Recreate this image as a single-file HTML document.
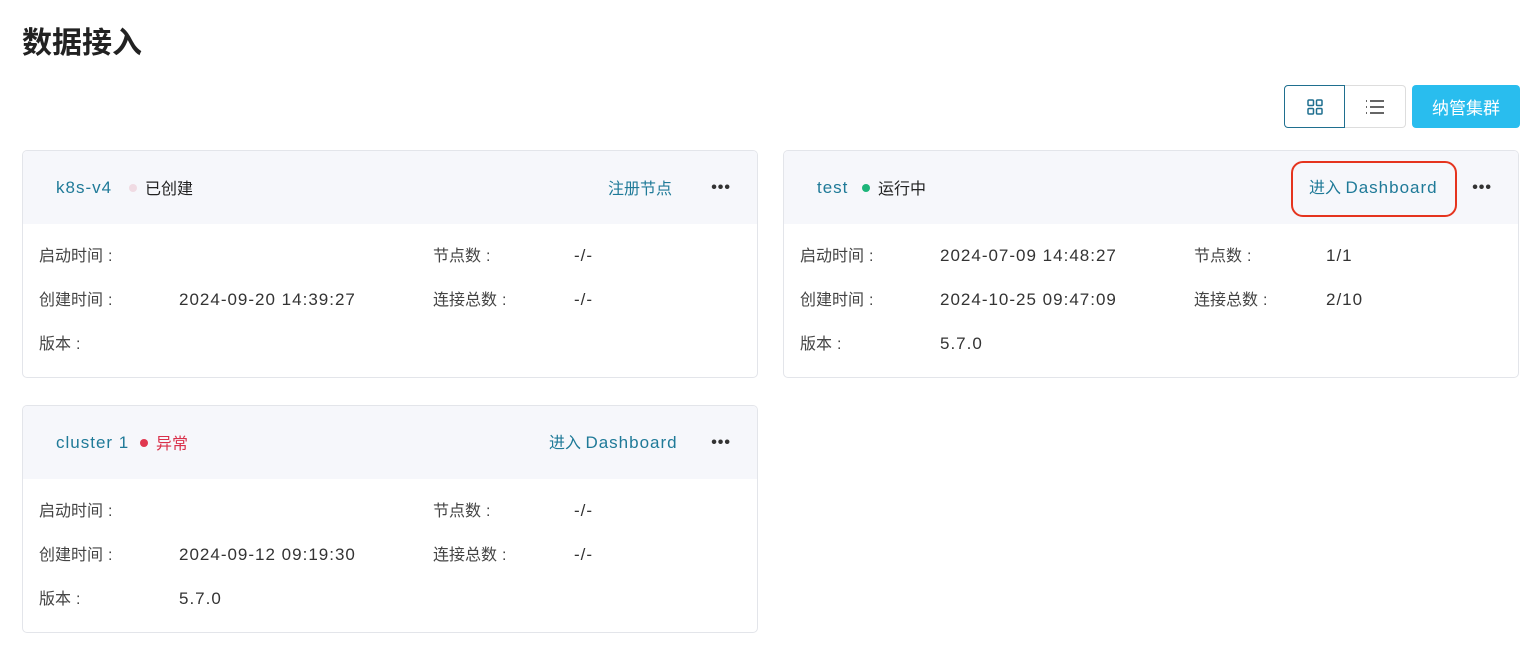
<!DOCTYPE html>
<html><head><meta charset="utf-8"><style>
*{margin:0;padding:0;box-sizing:border-box}
body{width:1536px;height:653px;background:#fff;font-family:"Liberation Sans","Noto Sans CJK SC",sans-serif;position:relative;overflow:hidden;color:#333}
h1{position:absolute;left:22px;top:20px;font-size:30px;line-height:40px;font-weight:bold;color:#222;font-family:"Noto Sans CJK SC",sans-serif}
.btns{position:absolute;left:1284px;top:85px;height:43px;display:flex}
.b{width:61px;height:43px;border:1px solid #ddd;display:flex;align-items:center;justify-content:center}
.b1{border:1.5px solid #1f6f8f;border-radius:4px 0 0 4px}
.b2{border-left:none;border-radius:0 4px 4px 0}
.add{position:absolute;left:1412px;top:85px;width:108px;height:43px;background:#29bdee;color:#fff;border-radius:4px;font-size:17px;display:flex;align-items:center;justify-content:center;font-family:"Noto Sans CJK SC",sans-serif}
.card{position:absolute;width:736px;height:228px;border:1px solid #e3e5ea;border-radius:5px;overflow:hidden}
.hd{height:73px;background:#f6f7fb;position:relative;font-size:16px}
.hd span{line-height:24px}
.name{position:absolute;left:33px;top:25px;color:#1f7a98}
.st{position:absolute;top:24px;color:#222;font-family:"Noto Sans CJK SC",sans-serif}
.dot{display:inline-block;width:8px;height:8px;border-radius:50%;margin-right:8px;vertical-align:2px}
.lk{position:absolute;top:25px;color:#1f7a98;white-space:nowrap}
.more{position:absolute;right:26px;top:25px;font-size:16px;letter-spacing:1px;color:#333;font-weight:bold}
.r{position:absolute;font-size:16px;line-height:24px;color:#444;white-space:nowrap;font-family:"Noto Sans CJK SC",sans-serif}
.r:not(.v){margin-top:-1px}
.c{font-family:"Liberation Sans",sans-serif;margin-left:5px}
.v{color:#333;font-family:"Liberation Sans",sans-serif;font-size:17px;letter-spacing:1px;margin-top:1px}
.L{font-family:"Liberation Sans",sans-serif;font-size:17px;letter-spacing:1px}
</style></head><body>
<h1>数据接入</h1>
<div class="btns"><div class="b b1"><svg width="18" height="18" viewBox="0 0 18 18" fill="none" stroke="#1f6f8f" stroke-width="1.5"><rect x="2" y="2" width="5.5" height="5.5" rx="1"/><rect x="10.5" y="2" width="5.5" height="5.5" rx="1"/><rect x="2" y="10.5" width="5.5" height="5.5" rx="1"/><rect x="10.5" y="10.5" width="5.5" height="5.5" rx="1"/></svg></div><div class="b b2"><svg width="20" height="16" viewBox="0 0 20 16" stroke="#333" stroke-width="1.4"><path d="M1 2h1M1 8h1M1 14h1M5 2h14M5 8h14M5 14h14"/></svg></div></div>
<div class="add">纳管集群</div>

<div class="card" style="left:22px;top:150px">
<div class="hd"><span class="name L">k8s-v4</span><span class="st" style="left:106px"><span class="dot" style="background:#f0dbe3"></span>已创建</span><span class="lk" style="left:585px;top:24px;font-family:'Noto Sans CJK SC',sans-serif">注册节点</span><span class="more">•••</span></div>
<div class="r" style="left:16px;top:92px">启动时间<span class="c">:</span></div><div class="r" style="left:410px;top:92px">节点数<span class="c">:</span></div><div class="r v" style="left:551px;top:92px">-/-</div>
<div class="r" style="left:16px;top:136px">创建时间<span class="c">:</span></div><div class="r v" style="left:156px;top:136px">2024-09-20 14:39:27</div><div class="r" style="left:410px;top:136px">连接总数<span class="c">:</span></div><div class="r v" style="left:551px;top:136px">-/-</div>
<div class="r" style="left:16px;top:180px">版本<span class="c">:</span></div>
</div>

<div class="card" style="left:783px;top:150px">
<div class="hd"><span class="name L">test</span><span class="st" style="left:78px"><span class="dot" style="background:#1db57a"></span>运行中</span><span class="lk" style="left:525px">进入 <span class="L">Dashboard</span></span><span class="more">•••</span>
<div style="position:absolute;left:507px;top:10px;width:166px;height:56px;border:2px solid #e5341e;border-radius:12px"></div></div>
<div class="r" style="left:16px;top:92px">启动时间<span class="c">:</span></div><div class="r v" style="left:156px;top:92px">2024-07-09 14:48:27</div><div class="r" style="left:410px;top:92px">节点数<span class="c">:</span></div><div class="r v" style="left:542px;top:92px">1/1</div>
<div class="r" style="left:16px;top:136px">创建时间<span class="c">:</span></div><div class="r v" style="left:156px;top:136px">2024-10-25 09:47:09</div><div class="r" style="left:410px;top:136px">连接总数<span class="c">:</span></div><div class="r v" style="left:542px;top:136px">2/10</div>
<div class="r" style="left:16px;top:180px">版本<span class="c">:</span></div><div class="r v" style="left:156px;top:180px">5.7.0</div>
</div>

<div class="card" style="left:22px;top:405px">
<div class="hd"><span class="name L">cluster 1</span><span class="st" style="left:117px;color:#d9304a"><span class="dot" style="background:#e0374f"></span>异常</span><span class="lk" style="left:526px">进入 <span class="L">Dashboard</span></span><span class="more">•••</span></div>
<div class="r" style="left:16px;top:92px">启动时间<span class="c">:</span></div><div class="r" style="left:410px;top:92px">节点数<span class="c">:</span></div><div class="r v" style="left:551px;top:92px">-/-</div>
<div class="r" style="left:16px;top:136px">创建时间<span class="c">:</span></div><div class="r v" style="left:156px;top:136px">2024-09-12 09:19:30</div><div class="r" style="left:410px;top:136px">连接总数<span class="c">:</span></div><div class="r v" style="left:551px;top:136px">-/-</div>
<div class="r" style="left:16px;top:180px">版本<span class="c">:</span></div><div class="r v" style="left:156px;top:180px">5.7.0</div>
</div>
</body></html>
